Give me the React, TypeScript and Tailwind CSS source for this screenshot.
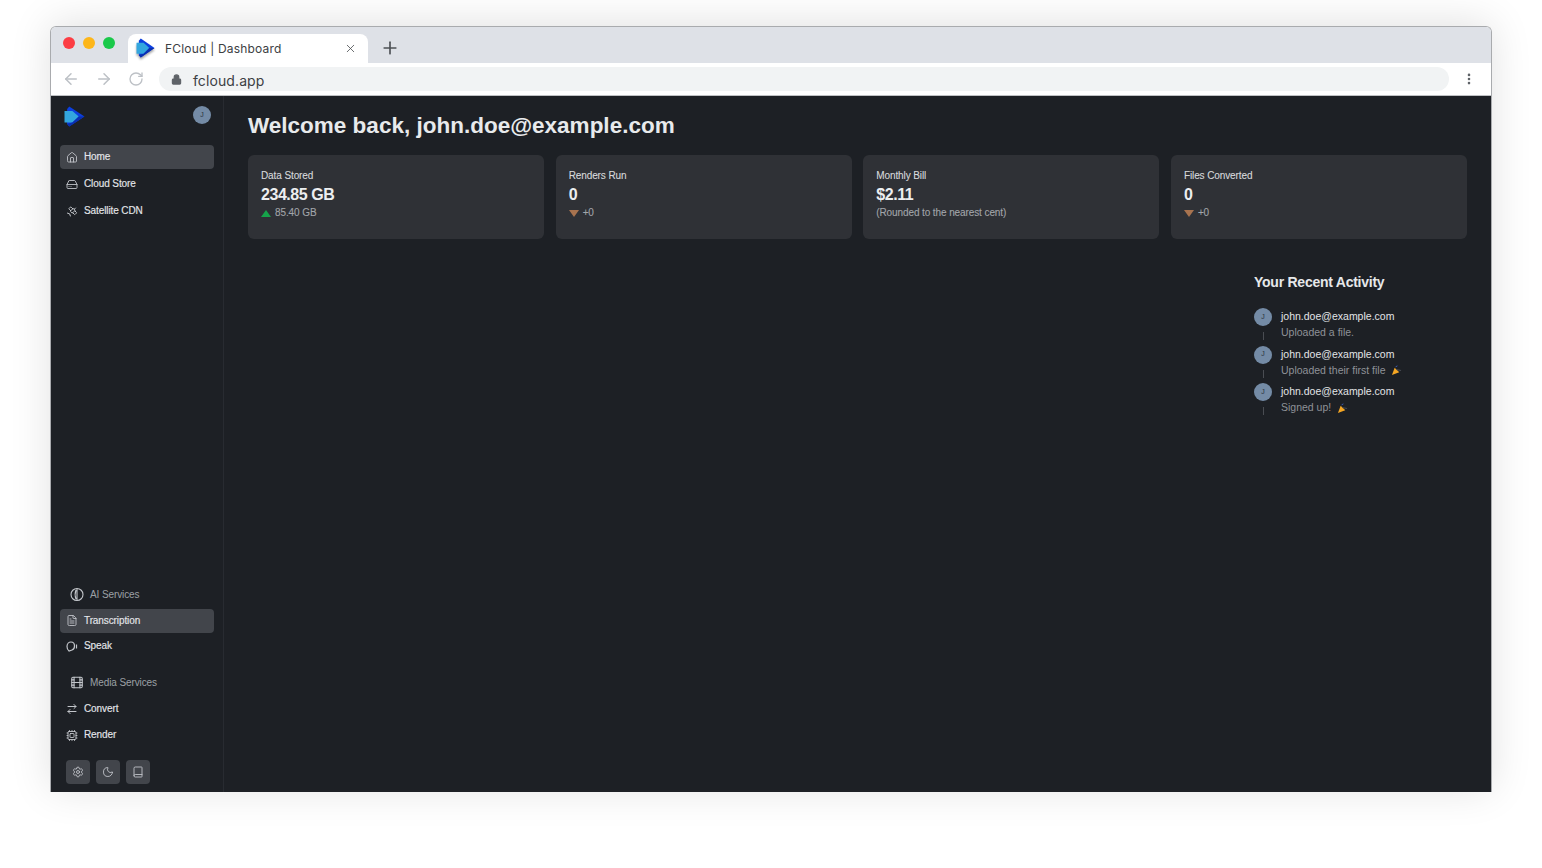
import { ArrowLeft, ArrowRight, ArrowRightLeft, Book, Cpu, EllipsisVertical, FileText, Film, HardDrive, House, Lock, Moon, Plus, RotateCw, Satellite, Settings, X } from "lucide-react";
import type { ReactNode } from "react";

function Logo({ w, h, className }: { w: number; h: number; className?: string }) {
  return (
    <svg width={w} height={h} viewBox="0 0 20 22" fill="none" preserveAspectRatio="none" className={className}>
      <path d="M3 3 L5 0.5 L19.5 10.5 L5 20.5 L3 18 Z" fill="#0b3fe0" />
      <path d="M0.5 5 L8 5 L14 10.5 L8 16.5 L0.5 16.5 Z" fill="#33a6de" />
      <path d="M3 18 L5 20.5 L19.5 10.5 L14 10.5 L8 16.5 Z" fill="#0a2fb0" />
    </svg>
  );
}

function Avatar() {
  return (
    <div className="w-[18px] h-[18px] rounded-full bg-[#748ba6] flex items-center justify-center text-[7px] text-[#2b3440] shrink-0">J</div>
  );
}

function Nav({ icon, label, active }: { icon: ReactNode; label: string; active?: boolean }) {
  return (
    <div className={`h-6 rounded flex items-center pl-1.5 gap-1.5 text-[10px] leading-none tracking-[-0.1px] text-[#e4e6ea] [-webkit-text-stroke:0.15px] ${active ? "bg-[#42454b]" : ""}`}>
      <span className="w-3 h-3 flex items-center justify-center text-[#c3c6cb]">{icon}</span>
      <span>{label}</span>
    </div>
  );
}

function Heading({ icon, label }: { icon: ReactNode; label: string }) {
  return (
    <div className="h-[18px] flex items-center pl-[10px] gap-1.5 text-[10px] tracking-[-0.1px] text-[#9ca0a6]">
      <span className="w-3.5 h-3.5 flex items-center justify-center text-[#c3c6cb]">{icon}</span>
      <span>{label}</span>
    </div>
  );
}

function Card({ label, value, sub, dir }: { label: string; value: string; sub: string; dir?: "up" | "down" }) {
  return (
    <div className="h-[84px] rounded-md bg-[#2f3136] px-[13px] pt-[15px]">
      <div className="text-[10px] leading-3 tracking-[-0.1px] text-[#d7d9dc] [-webkit-text-stroke:0.1px]">{label}</div>
      <div className="mt-[3px] text-base leading-5 tracking-[-0.45px] font-bold text-[#eceef0]">{value}</div>
      <div className="mt-[2px] flex items-center gap-1 text-[10px] leading-3 tracking-[-0.1px] text-[#a2a5aa] [-webkit-text-stroke:0.1px]">
        {dir === "up" && <span className="w-0 h-0 border-x-[5px] border-x-transparent border-b-[7px] border-b-[#16a34a]" />}
        {dir === "down" && <span className="w-0 h-0 border-x-[5px] border-x-transparent border-t-[7px] border-t-[#a8734f]" />}
        <span>{sub}</span>
      </div>
    </div>
  );
}

function Popper() {
  return (
    <svg width="11" height="11" viewBox="0 0 12 12" className="ml-1.5 mt-0.5">
      <path d="M1 11 L4 3 L9 8 Z" fill="#f5a623" />
      <path d="M6 5 L11 6" stroke="#4b4f57" strokeWidth="1" />
      <path d="M5 2 L7 1" stroke="#3b5fc0" strokeWidth="1" />
    </svg>
  );
}

function Activity({ text, party }: { text: string; party?: boolean }) {
  return (
    <div className="flex gap-[9px] h-[37.7px]">
      <div className="flex flex-col items-center w-[18px]">
        <Avatar />
        <div className="w-px h-2 mt-1.5 bg-[#4a4d53]" />
      </div>
      <div className="text-[10.5px] leading-4">
        <div className="text-[#e2e4e7]">john.doe@example.com</div>
        <div className="text-[#8f9298] flex items-center">
          {text}
          {party && <Popper />}
        </div>
      </div>
    </div>
  );
}

export default function App() {
  return (
    <div className="w-[1542px] h-[868px] bg-white pl-[50px] pt-[26px] overflow-hidden font-['Liberation_Sans',sans-serif]">
      <div className="w-[1442px] h-[766px] flex flex-col rounded-t-md overflow-hidden shadow-[0_-3px_42px_rgba(0,0,0,0.12)] border-t border-x border-t-[#a9abae] border-x-[#a9abae]">
        <div className="h-[36px] bg-[#dee1e7] flex items-end shrink-0 relative">
          <div className="absolute left-[12px] top-[12px] flex gap-2 -mt-0.5">
            <span className="w-3 h-3 rounded-full bg-[#fc3d44]" />
            <span className="w-3 h-3 rounded-full bg-[#fdb61a]" />
            <span className="w-3 h-3 rounded-full bg-[#1ac94a]" />
          </div>
          <div className="ml-[77px] w-[240px] h-[29px] bg-white rounded-t-lg flex items-center pl-[8px] pr-[11px] font-['Inter',sans-serif] text-[12px] tracking-[0.2px] text-[#3c4043]">
            <Logo w={19} h={21} className="drop-shadow-[0_2px_1px_rgba(0,0,0,0.35)]" />
            <span className="ml-[10px] flex-1">FCloud | Dashboard</span>
            <X size={13} strokeWidth={1.5} className="text-[#4a4d50]" />
          </div>
          <Plus size={20} strokeWidth={2} className="ml-[12px] mb-[5px] text-[#4d5156]" />
        </div>
        <div className="h-[33px] bg-white flex items-center shrink-0 border-b border-b-[#bfc1c4] pl-[11px] pr-[15px]">
          <ArrowLeft size={18} strokeWidth={2} className="text-[#bdc1c6]" />
          <ArrowRight size={18} strokeWidth={2} className="text-[#bdc1c6] ml-[15px]" />
          <RotateCw size={16} strokeWidth={2} className="text-[#bdc1c6] ml-[15px]" />
          <div className="ml-[15px] flex-1 h-6 rounded-full bg-[#f1f3f4] flex items-center pl-[12px] font-['Inter',sans-serif] text-[14px] text-[#3c4043]">
            <Lock size={11} strokeWidth={2.5} fill="#5f6368" className="text-[#5f6368]" />
            <span className="ml-[11px] mt-0.5 tracking-[0.1px]">fcloud.app</span>
          </div>
          <EllipsisVertical size={14} strokeWidth={2.5} className="ml-[13px] text-[#5f6368]" />
        </div>
        <div className="flex-1 flex bg-[#1d2025] min-h-0">
          <aside className="w-[173px] shrink-0 border-r border-r-[#282b31] flex flex-col px-[9px] pt-2.5 pb-2">
            <div className="flex items-start justify-between pr-[3px] h-[21px] pl-[4px]">
              <Logo w={21} h={22} />
              <Avatar />
            </div>
            <div className="mt-[18px] flex flex-col gap-[3px]">
              <Nav icon={<House size={13} strokeWidth={1.75} />} label="Home" active />
              <Nav icon={<HardDrive size={13} strokeWidth={1.75} />} label="Cloud Store" />
              <Nav icon={<Satellite size={13} strokeWidth={2} />} label="Satellite CDN" />
            </div>
            <div className="flex-1" />
            <Heading icon={
              <svg width="15" height="15" viewBox="0 0 14 14" fill="none" stroke="currentColor" strokeWidth="1.1">
                <circle cx="7" cy="7" r="6" />
                <path d="M7 1 V13 M6 2.5 C5 5 5 9 6 11.5" />
              </svg>
            } label="AI Services" />
            <div className="mt-[5.5px] flex flex-col gap-[1.5px]">
              <Nav icon={<FileText size={13} strokeWidth={1.75} />} label="Transcription" active />
              <Nav icon={
                <svg width="13" height="13" viewBox="0 0 12 12" fill="none" stroke="currentColor" strokeWidth="1.2">
                  <path d="M1 6 C1 3 3 1.5 5 1.5 C7 1.5 8.5 3 8.5 5.5 C8.5 8 7.5 9 6 9.5 L3 10.5 C1.5 9.5 1 8 1 6 Z" />
                  <path d="M10.5 4 V8" />
                </svg>
              } label="Speak" />
            </div>
            <div className="mt-[15px]">
              <Heading icon={<Film size={15} strokeWidth={1.75} />} label="Media Services" />
            </div>
            <div className="mt-[6px] flex flex-col gap-[2px]">
              <Nav icon={<ArrowRightLeft size={16} strokeWidth={2} />} label="Convert" />
              <Nav icon={<Cpu size={13} strokeWidth={1.75} />} label="Render" />
            </div>
            <div className="mt-[13px] ml-1.5 flex gap-1.5">
              {[<Settings size={12} strokeWidth={1.75} />, <Moon size={12} strokeWidth={1.75} />, <Book size={12} strokeWidth={1.75} />].map((ic, i) => (
                <div key={i} className="w-6 h-6 rounded bg-[#42454b] text-[#c3c6cb] flex items-center justify-center">{ic}</div>
              ))}
            </div>
          </aside>
          <main className="flex-1 pl-6 pr-6 pt-[15px] min-w-0">
            <h1 className="text-[22.5px] leading-[30px] font-bold text-[#e8eaec]">Welcome back, john.doe@example.com</h1>
            <div className="mt-[14px] grid grid-cols-4 gap-[11.5px]">
              <Card label="Data Stored" value="234.85 GB" sub="85.40 GB" dir="up" />
              <Card label="Renders Run" value="0" sub="+0" dir="down" />
              <Card label="Monthly Bill" value="$2.11" sub="(Rounded to the nearest cent)" />
              <Card label="Files Converted" value="0" sub="+0" dir="down" />
            </div>
            <div className="mt-[34px] ml-auto w-[213px]">
              <div className="text-sm leading-[18px] tracking-[-0.25px] font-bold text-[#e6e8ea]">Your Recent Activity</div>
              <div className="mt-[17px]">
                <Activity text="Uploaded a file." />
                <Activity text="Uploaded their first file" party />
                <Activity text="Signed up!" party />
              </div>
            </div>
          </main>
        </div>
      </div>
    </div>
  );
}
